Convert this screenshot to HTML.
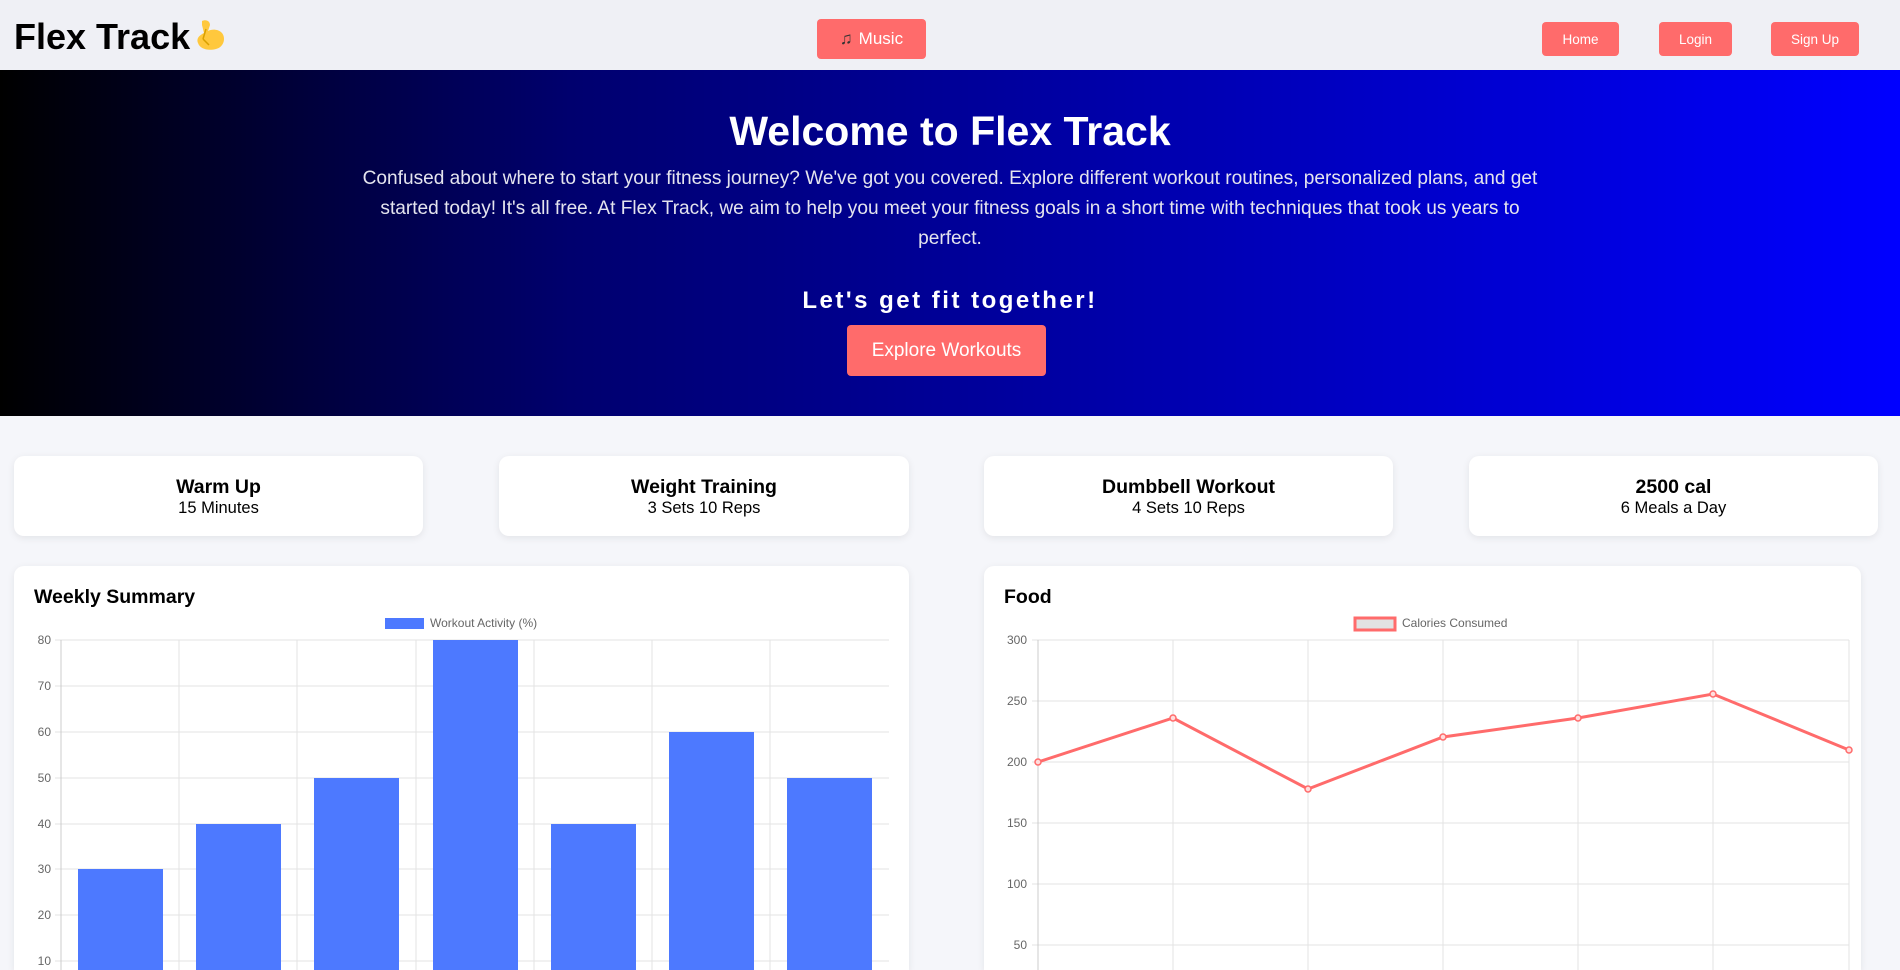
<!DOCTYPE html>
<html><head><meta charset="utf-8"><style>
*{margin:0;padding:0;box-sizing:border-box}
html{width:1900px;height:970px;overflow:hidden}
body{width:1900px;height:970px;overflow:hidden;background:#f5f6fa;font-family:"Liberation Sans",Arial,sans-serif;position:relative}
.nav{position:absolute;left:0;top:0;width:1900px;height:70px;background:#eff0f5}
.logo{position:absolute;left:14px;top:16px;font-size:36px;font-weight:bold;color:#000}
.btn{position:absolute;background:#ff6b6b;color:#fff;border-radius:4px;display:flex;align-items:center;justify-content:center}
.hero{position:absolute;left:0;top:70px;width:1900px;height:346px;background:linear-gradient(90deg,#000 0%,#00006e 30%,#0000ff 100%);text-align:center;color:#fff}
.hero h1{position:absolute;width:100%;font-size:41px;top:38px}
.hero p{position:absolute;left:350px;width:1200px;top:94px;font-size:19.1px;line-height:30px;color:#e4e4ee}
.hero h2{position:absolute;top:217px;width:100%;font-size:24px;letter-spacing:2.5px}
.card{position:absolute;background:#fff;border-radius:10px;box-shadow:0 2px 8px rgba(0,0,0,.08);text-align:center}
.card b{display:block;font-size:19.5px;margin-top:20px}
.card span{display:block;font-size:16.5px;margin-top:0}
.panel{position:absolute;background:#fff;border-radius:10px 10px 0 0;box-shadow:0 2px 8px rgba(0,0,0,.08)}
.panel h3{position:absolute;left:20px;top:20px;font-size:19.5px}
svg text{font-family:"Liberation Sans",Arial,sans-serif;font-size:12px;fill:#666}
</style></head><body>
<div class="nav">
<div class="logo">Flex Track<span style="display:inline-block;width:36px;height:36px;vertical-align:-4px;margin-left:2px"><svg width="36" height="36" viewBox="0 0 36 36"><path d="M10 4c4-2 8 0 8 4l-2 6c4-2 10-2 14 2 4 5 2 14-6 16-8 2-16 0-18-6-2-5 2-8 6-10L10 8z" fill="#ffc83d"/><path d="M14 12l-3 10M11 22l6 6" stroke="#d9a000" stroke-width="1.5" fill="none"/></svg></span></div>
<div class="btn" style="left:817px;top:19px;width:109px;height:40px;font-size:17px"><span style="font-size:17px;color:#333;margin-right:6px">♫</span>Music</div>
<div class="btn" style="left:1542px;top:22px;width:77px;height:34px;font-size:13.5px">Home</div>
<div class="btn" style="left:1659px;top:22px;width:73px;height:34px;font-size:13.5px">Login</div>
<div class="btn" style="left:1771px;top:22px;width:88px;height:34px;font-size:13.5px">Sign Up</div>
</div>
<div class="hero">
<h1>Welcome to Flex Track</h1>
<p>Confused about where to start your fitness journey? We've got you covered. Explore different workout routines, personalized plans, and get started today! It's all free. At Flex Track, we aim to help you meet your fitness goals in a short time with techniques that took us years to perfect.</p>
<h2>Let's get fit together!</h2>
<div class="btn" style="left:847px;top:255px;width:199px;height:51px;font-size:19px">Explore Workouts</div>
</div>
<div class="card" style="left:14px;top:456px;width:409px;height:80px"><b>Warm Up</b><span>15 Minutes</span></div>
<div class="card" style="left:499px;top:456px;width:410px;height:80px"><b>Weight Training</b><span>3 Sets 10 Reps</span></div>
<div class="card" style="left:984px;top:456px;width:409px;height:80px"><b>Dumbbell Workout</b><span>4 Sets 10 Reps</span></div>
<div class="card" style="left:1469px;top:456px;width:409px;height:80px"><b>2500 cal</b><span>6 Meals a Day</span></div>

<div class="panel" style="left:14px;top:566px;width:895px;height:404px"><h3>Weekly Summary</h3></div>
<div class="panel" style="left:984px;top:566px;width:877px;height:404px"><h3>Food</h3></div>

<svg width="1900" height="970" style="position:absolute;left:0;top:0">
<g stroke="#e3e3e3" stroke-width="1">
<line x1="55" y1="640" x2="889" y2="640"/><line x1="55" y1="686" x2="889" y2="686"/><line x1="55" y1="732" x2="889" y2="732"/><line x1="55" y1="778" x2="889" y2="778"/><line x1="55" y1="824" x2="889" y2="824"/><line x1="55" y1="869" x2="889" y2="869"/><line x1="55" y1="915" x2="889" y2="915"/><line x1="55" y1="961" x2="889" y2="961"/>
<line x1="61" y1="640" x2="61" y2="970" stroke="#ccc"/><line x1="179" y1="640" x2="179" y2="970"/><line x1="297" y1="640" x2="297" y2="970"/><line x1="416" y1="640" x2="416" y2="970"/><line x1="534" y1="640" x2="534" y2="970"/><line x1="652" y1="640" x2="652" y2="970"/><line x1="770" y1="640" x2="770" y2="970"/>
</g>
<g fill="#4d79ff">
<rect x="78" y="869" width="85" height="101"/><rect x="196" y="824" width="85" height="146"/><rect x="314" y="778" width="85" height="192"/><rect x="433" y="640" width="85" height="330"/><rect x="551" y="824" width="85" height="146"/><rect x="669" y="732" width="85" height="238"/><rect x="787" y="778" width="85" height="192"/>
<rect x="385" y="618" width="39" height="11"/>
</g>
<text x="430" y="627">Workout Activity (%)</text>
<g text-anchor="end"><text x="51" y="644">80</text><text x="51" y="690">70</text><text x="51" y="736">60</text><text x="51" y="782">50</text><text x="51" y="828">40</text><text x="51" y="873">30</text><text x="51" y="919">20</text><text x="51" y="965">10</text></g>

<g stroke="#e3e3e3" stroke-width="1">
<line x1="1032" y1="640" x2="1849" y2="640"/><line x1="1032" y1="701" x2="1849" y2="701"/><line x1="1032" y1="762" x2="1849" y2="762"/><line x1="1032" y1="823" x2="1849" y2="823"/><line x1="1032" y1="884" x2="1849" y2="884"/><line x1="1032" y1="945" x2="1849" y2="945"/>
<line x1="1038" y1="640" x2="1038" y2="970" stroke="#ccc"/><line x1="1173" y1="640" x2="1173" y2="970"/><line x1="1308" y1="640" x2="1308" y2="970"/><line x1="1443" y1="640" x2="1443" y2="970"/><line x1="1578" y1="640" x2="1578" y2="970"/><line x1="1713" y1="640" x2="1713" y2="970"/><line x1="1849" y1="640" x2="1849" y2="970"/>
</g>
<rect x="1355" y="618" width="40" height="12" fill="#e2e2e2" stroke="#ff6b6b" stroke-width="3"/>
<text x="1402" y="627">Calories Consumed</text>
<g text-anchor="end"><text x="1027" y="644">300</text><text x="1027" y="705">250</text><text x="1027" y="766">200</text><text x="1027" y="827">150</text><text x="1027" y="888">100</text><text x="1027" y="949">50</text></g>
<polyline points="1038,762 1173,718 1308,789 1443,737 1578,718 1713,694 1849,750" fill="none" stroke="#ff6b6b" stroke-width="3"/>
<g fill="#fdd" stroke="#ff6b6b" stroke-width="1.5"><circle cx="1038" cy="762" r="3"/><circle cx="1173" cy="718" r="3"/><circle cx="1308" cy="789" r="3"/><circle cx="1443" cy="737" r="3"/><circle cx="1578" cy="718" r="3"/><circle cx="1713" cy="694" r="3"/><circle cx="1849" cy="750" r="3"/></g>
</svg>
</body></html>
